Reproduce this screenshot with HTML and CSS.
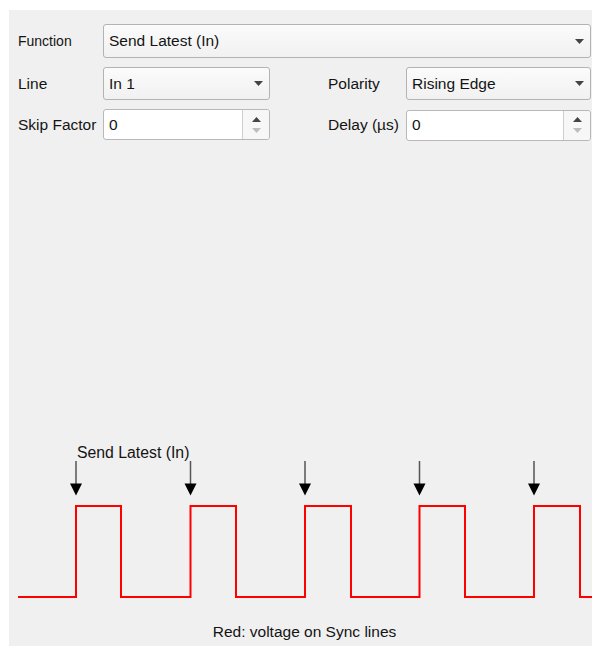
FILE: index.html
```html
<!DOCTYPE html>
<html>
<head>
<meta charset="utf-8">
<link rel="stylesheet" href="styles.css">
</head>
<body>
<div class="panel">
  <div class="form">
    <div class="label small">Function</div>
    <div class="combo wide">
      <span>Send Latest (In)</span>
      <svg class="caret" width="9" height="5" viewBox="0 0 9 5"><polygon points="0,0 9,0 4.5,5" fill="#444"/></svg>
    </div>

    <div class="label">Line</div>
    <div class="combo">
      <span>In 1</span>
      <svg class="caret" width="9" height="5" viewBox="0 0 9 5"><polygon points="0,0 9,0 4.5,5" fill="#444"/></svg>
    </div>
    <div></div>
    <div class="label">Polarity</div>
    <div class="combo">
      <span>Rising Edge</span>
      <svg class="caret" width="9" height="5" viewBox="0 0 9 5"><polygon points="0,0 9,0 4.5,5" fill="#444"/></svg>
    </div>

    <div class="label">Skip Factor</div>
    <div class="spin">
      <span class="value">0</span>
      <div class="spin-btns">
        <svg width="9" height="5" viewBox="0 0 9 5"><polygon points="0,5 9,5 4.5,0" fill="#444"/></svg>
        <svg width="9" height="5" viewBox="0 0 9 5"><polygon points="0,0 9,0 4.5,5" fill="#bdbdbd"/></svg>
      </div>
    </div>
    <div></div>
    <div class="label">Delay (µs)</div>
    <div class="spin">
      <span class="value">0</span>
      <div class="spin-btns">
        <svg width="9" height="5" viewBox="0 0 9 5"><polygon points="0,5 9,5 4.5,0" fill="#444"/></svg>
        <svg width="9" height="5" viewBox="0 0 9 5"><polygon points="0,0 9,0 4.5,5" fill="#bdbdbd"/></svg>
      </div>
    </div>
  </div>

  <svg class="diagram" width="583" height="180" viewBox="9 430 583 180">
    <text x="77" y="458" class="dlabel">Send Latest (In)</text>
    <g stroke="#555" stroke-width="1.5">
      <line x1="76" y1="461" x2="76" y2="485"/>
      <line x1="190.5" y1="461" x2="190.5" y2="485"/>
      <line x1="305" y1="461" x2="305" y2="485"/>
      <line x1="419.5" y1="461" x2="419.5" y2="485"/>
      <line x1="534" y1="461" x2="534" y2="485"/>
    </g>
    <g fill="#000">
      <polygon points="70,483.5 82,483.5 76,495.5"/>
      <polygon points="184.5,483.5 196.5,483.5 190.5,495.5"/>
      <polygon points="299,483.5 311,483.5 305,495.5"/>
      <polygon points="413.5,483.5 425.5,483.5 419.5,495.5"/>
      <polygon points="528,483.5 540,483.5 534,495.5"/>
    </g>
    <path d="M18 597 H76 V506 H121 V597 H190.5 V506 H236 V597 H305 V506 H351 V597 H419.5 V506 H465 V597 H534 V506 H580 V597 H592" fill="none" stroke="#ff0000" stroke-width="2"/>
  </svg>

  <div class="caption">Red: voltage on Sync lines</div>
</div>
</body>
</html>
```

FILE: styles.css
```css
html, body {
  margin: 0;
  padding: 0;
  background: #ffffff;
}

body {
  font-family: "Liberation Sans", Arial, sans-serif;
  font-size: 15.5px;
  color: #141414;
}

.panel {
  margin: 10px 0 0 9px;
  width: 583px;
  height: 636px;
  box-sizing: border-box;
  padding: 14px 1px 4px 9px;
  background: #f0f0f0;
  display: flex;
  flex-direction: column;
}

.form {
  display: grid;
  grid-template-columns: 85px 167px 58px 78px 185px;
  grid-template-rows: 34px 33px 31px;
  row-gap: 9px;
  align-items: center;
}

.form > :nth-child(n+10) {
  margin-top: 1px;
}

.label {
  white-space: nowrap;
}

.label.small {
  font-size: 14px;
}

.combo {
  height: 100%;
  box-sizing: border-box;
  border: 1px solid #b3b3b3;
  border-radius: 3px;
  background: linear-gradient(#fbfbfb, #f1f1f1);
  display: flex;
  align-items: center;
  justify-content: space-between;
  padding: 0 6px 0 5px;
}

.combo.wide {
  grid-column: 2 / 6;
}

.caret {
  display: block;
}

.spin {
  height: 100%;
  box-sizing: border-box;
  border: 1px solid #b8b8b8;
  border-radius: 3px;
  background: #ffffff;
  display: flex;
  align-items: stretch;
}

.spin .value {
  flex: 1;
  display: flex;
  align-items: center;
  padding-left: 5px;
}

.spin-btns {
  width: 26px;
  border-left: 1px solid #cfcfcf;
  background: #f7f7f7;
  border-radius: 0 3px 3px 0;
  display: flex;
  flex-direction: column;
  align-items: center;
  justify-content: center;
  gap: 6px;
}

.spin-btns svg {
  display: block;
}

.diagram {
  margin-top: auto;
  margin-left: -9px;
  display: block;
}

.dlabel {
  font-family: "Liberation Sans", Arial, sans-serif;
  font-size: 15.8px;
  fill: #141414;
}

.caption {
  margin-top: 12px;
  height: 20px;
  line-height: 20px;
  text-align: center;
}
```
